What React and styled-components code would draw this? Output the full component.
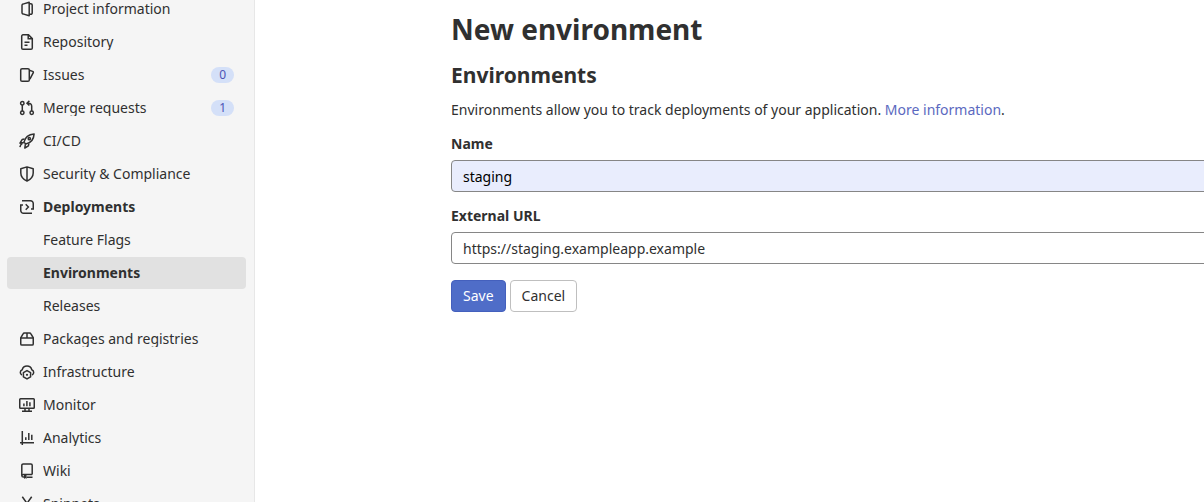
import React from "react";
import styled, { createGlobalStyle } from "styled-components";

const GlobalStyle = createGlobalStyle`
  *, *::before, *::after { box-sizing: border-box; }
  body {
    margin: 0;
    background: #fff;
    color: #303030;
    font-family: "Noto Sans", "Liberation Sans", sans-serif;
    font-size: 14px;
    line-height: 20px;
  }
`;

const Page = styled.div`
  display: flex;
  height: 100vh;
  overflow: hidden;
`;

const Sidebar = styled.nav`
  flex: 0 0 255px;
  background: #f5f5f5;
  border-right: 1px solid #e7e7e7;
  overflow: hidden;
`;

/* The list rests slightly scrolled, so its first row is cut by the top edge. */
const NavList = styled.ul`
  list-style: none;
  margin: -7px 8px 0 7px;
  padding: 0;
  display: flex;
  flex-direction: column;
  gap: 1px;
`;

const NavLink = styled.a`
  display: flex;
  align-items: center;
  gap: 8px;
  height: 32px;
  padding: 0 12px;
  padding-left: ${(p) => (p.$nested ? "36px" : "12px")};
  border-radius: 4px;
  color: #303030;
  text-decoration: none;
  font-weight: ${(p) => (p.$strong ? 700 : 400)};
  background: ${(p) => (p.$selected ? "#e1e1e1" : "transparent")};
`;

const NavText = styled.span`
  flex: 1;
  line-height: ${(p) => (p.$nested ? "20px" : "16px")};
  overflow: hidden;
  white-space: nowrap;
`;

const Badge = styled.span`
  padding: 0 8px;
  border-radius: 8px;
  background: #d4e0f8;
  color: #4b53b5;
  font-size: 12px;
  line-height: 16px;
`;

const Glyph = styled.svg`
  flex: none;
  width: 16px;
  height: 16px;
  fill: none;
  stroke: #303030;
  stroke-width: 1.5;
`;

const Main = styled.main`
  flex: 1;
  min-width: 0;
  padding: 11px 0 0 196px;
  overflow: hidden;
`;

const Title = styled.h1`
  margin: 0 0 16px;
  font-size: 28px;
  line-height: 36px;
  font-weight: 700;
`;

const Subtitle = styled.h2`
  margin: 0 0 12px;
  font-size: 21px;
  line-height: 25px;
  font-weight: 700;
`;

const Intro = styled.p`
  margin: 0 0 16px;
`;

const TextLink = styled.a`
  color: #5b69c0;
  text-decoration: none;
`;

/* Fields run on under the right edge of the window. */
const Field = styled.div`
  display: flex;
  flex-direction: column;
  margin: 0 -16px 16px 0;
`;

const Label = styled.label`
  display: block;
  margin-bottom: 8px;
  line-height: 16px;
  font-weight: 700;
`;

const TextInput = styled.input`
  width: 100%;
  height: 32px;
  padding: 0 11px;
  border: 1px solid #868686;
  border-radius: 4px;
  outline: none;
  font: inherit;
  line-height: 16px;
  color: ${(p) => (p.$filled ? "#000" : "#303030")};
  background: ${(p) => (p.$filled ? "#e9edfd" : "#fff")};
`;

const Actions = styled.div`
  display: flex;
  gap: 4px;
`;

const Button = styled.button`
  height: 32px;
  padding: 0 11px;
  border: 1px solid ${(p) => (p.$primary ? "#4460bd" : "#bfbfbf")};
  border-radius: 4px;
  background: ${(p) => (p.$primary ? "#4f6dc8" : "#fff")};
  color: ${(p) => (p.$primary ? "#fff" : "#303030")};
  font: inherit;
  line-height: 16px;
`;

const icons = {
  project: (
    <>
      <path d="M10.2 1.2v13.6L3.9 12.9a1.2 1.2 0 0 1-.9-1.1V4.2a1.2 1.2 0 0 1 .9-1.1z" strokeLinejoin="round" />
      <path d="M10.2 2.7h1.6a1.4 1.4 0 0 1 1.4 1.4v7.8a1.4 1.4 0 0 1-1.4 1.4h-1.6" />
    </>
  ),
  document: (
    <>
      <path d="M9.5.8H4a1.3 1.3 0 0 0-1.3 1.3v11.8A1.3 1.3 0 0 0 4 15.2h8a1.3 1.3 0 0 0 1.3-1.3V4.6z" />
      <path d="M9.2 1v3.8h4M5.5 8.2h5M5.5 11.2h3" />
    </>
  ),
  issues: (
    <>
      <rect x="1.7" y="1.7" width="8.6" height="12.6" rx="1.4" />
      <path d="M10.4 3.3l3.2 1.1c.6.2.9.8.7 1.3l-3.4 6.5" />
    </>
  ),
  merge: (
    <>
      <circle cx="3.3" cy="3.2" r="1.7" />
      <circle cx="3.3" cy="12.8" r="1.7" />
      <circle cx="12.7" cy="12.8" r="1.7" />
      <path d="M3.3 5v6M12.7 11V6.2a3 3 0 0 0-3-3H8.3M10.4.9L8 3.2l2.4 2.3" />
    </>
  ),
  rocket: (
    <>
      <path d="M5 9.2C6 4.5 9.4 1.2 15.1.9 14.8 6.6 11.5 10 6.8 11z" strokeLinejoin="round" />
      <circle cx="10.3" cy="5.7" r="1.1" />
      <path d="M5.6 6.1L3.1 6.6 1 10.2l3.9-.6M9.9 10.4l-.5 2.5-3.6 2.1.6-3.9" strokeLinejoin="round" />
      <path d="M3.4 10.4C1.9 11.3 1.2 12.5.9 14.2" />
    </>
  ),
  shield: <path d="M8 .9L1.8 2.7v4.2c0 3.9 2.2 6.2 6.2 8.2 4-2 6.2-4.3 6.2-8.2V2.7zM8 1v14" strokeLinejoin="round" />,
  deployments: (
    <>
      <path d="M3 1.75h8.5a2.75 2.75 0 0 1 2.75 2.75v5.6H12M13 14.25H4.5a2.75 2.75 0 0 1-2.75-2.75V5.9H4" />
      <path d="M6.7 5.3L9.4 8l-2.7 2.7" />
    </>
  ),
  package: (
    <>
      <path d="M1.75 6.8l2.3-4a1.6 1.6 0 0 1 1.4-.9h5.1c.6 0 1.1.3 1.4.9l2.3 4v6.1c0 .7-.5 1.2-1.2 1.2H2.95c-.7 0-1.2-.5-1.2-1.2z" />
      <path d="M1.75 6.9h12.5M8 2v4.8" />
    </>
  ),
  cloud: (
    <>
      <path d="M2.9 11A2.9 2.9 0 0 1 3.2 5.7a5 5 0 0 1 9.6 0 2.9 2.9 0 0 1 .3 5.3" />
      <path d="M8 6.6l3.6 2.1v4.1L8 14.9l-3.6-2.1V8.7z" strokeLinejoin="round" />
      <circle cx="8" cy="10.8" r="1.1" fill="#303030" stroke="none" />
    </>
  ),
  monitor: (
    <>
      <rect x=".75" y="1.75" width="14.5" height="9.5" rx=".8" />
      <path d="M4.9 6.5v2.7M7.9 4v5.2M10.9 5.2v4M6 11.3v3M10 11.3v3M3 14.3h10" />
    </>
  ),
  chart: <path d="M3.3 1v14M1 12.7h14M6.8 7.2v2.9M9.8 3v7.1M12.8 4.8v5.3" />,
  book: (
    <>
      <path d="M13.2 11.5V2.3c0-.8-.5-1.3-1.3-1.3H4.2c-.8 0-1.4.6-1.4 1.4v10c0 1 .7 1.7 1.7 1.7H5M13.2 11.5H4.4c-.9 0-1.6.4-1.6 1.2M7.5 14.2h6" />
      <path d="M5 12v4l1.2-.9 1.3.9v-4z" fill="#303030" stroke="none" />
    </>
  ),
  snippet: (
    <>
      <path d="M3.3.7L10.6 11M12.7.7L5.4 11" />
      <circle cx="4" cy="12.8" r="2" />
      <circle cx="12" cy="12.8" r="2" />
    </>
  ),
};

const items = [
  { text: "Project information", icon: "project" },
  { text: "Repository", icon: "document" },
  { text: "Issues", icon: "issues", count: 0 },
  { text: "Merge requests", icon: "merge", count: 1 },
  { text: "CI/CD", icon: "rocket" },
  { text: "Security & Compliance", icon: "shield" },
  { text: "Deployments", icon: "deployments", strong: true },
  { text: "Feature Flags" },
  { text: "Environments", strong: true, selected: true },
  { text: "Releases" },
  { text: "Packages and registries", icon: "package" },
  { text: "Infrastructure", icon: "cloud" },
  { text: "Monitor", icon: "monitor" },
  { text: "Analytics", icon: "chart" },
  { text: "Wiki", icon: "book" },
  { text: "Snippets", icon: "snippet" },
];

function NavItem({ text, icon, count, strong, selected }) {
  return (
    <li>
      <NavLink
        href="#"
        $nested={!icon}
        $strong={strong}
        $selected={selected}
        aria-current={selected ? "page" : undefined}
      >
        {icon && (
          <Glyph viewBox="0 0 16 16" aria-hidden="true">
            {icons[icon]}
          </Glyph>
        )}
        <NavText $nested={!icon}>{text}</NavText>
        {count !== undefined && <Badge>{count}</Badge>}
      </NavLink>
    </li>
  );
}

export default function App() {
  return (
    <Page>
      <GlobalStyle />
      <Sidebar aria-label="Project">
        <NavList>
          {items.map((item) => (
            <NavItem key={item.text} {...item} />
          ))}
        </NavList>
      </Sidebar>
      <Main>
        <Title>New environment</Title>
        <Subtitle>Environments</Subtitle>
        <Intro>
          Environments allow you to track deployments of your application.{" "}
          <TextLink href="#">More information</TextLink>.
        </Intro>
        <form onSubmit={(e) => e.preventDefault()}>
          <Field>
            <Label htmlFor="env-name">Name</Label>
            <TextInput id="env-name" type="text" defaultValue="staging" $filled />
          </Field>
          <Field>
            <Label htmlFor="env-url">External URL</Label>
            <TextInput id="env-url" type="url" defaultValue="https://staging.exampleapp.example" />
          </Field>
          <Actions>
            <Button type="submit" $primary>Save</Button>
            <Button type="button">Cancel</Button>
          </Actions>
        </form>
      </Main>
    </Page>
  );
}
